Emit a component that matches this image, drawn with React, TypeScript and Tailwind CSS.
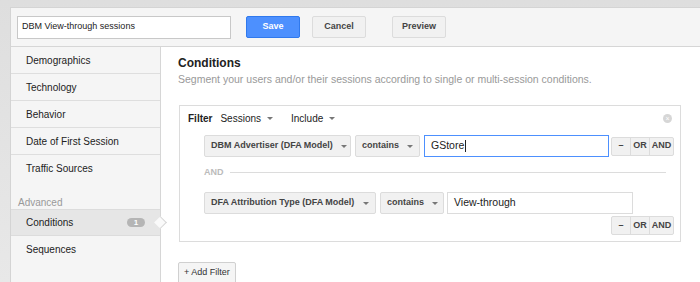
import React from 'react'

const sidebarItems = ['Demographics', 'Technology', 'Behavior', 'Date of First Session', 'Traffic Sources']

function Caret({ gap = 'ml-[8px]' }: { gap?: string }) {
    return <span className={`${gap} inline-block h-0 w-0 shrink-0 border-x-[3px] border-t-[3px] border-x-transparent border-t-[#777]`} />
}

function Dropdown({ label, w }: { label: string; w: string }) {
    return (
        <div className={`${w} flex h-[22px] items-center justify-between whitespace-nowrap rounded-[2px] border border-[#dcdcdc] bg-[#f1f1f1] px-[6px] text-[9px] font-bold text-[#444]`}>
            <span>{label}</span>
            <Caret />
        </div>
    )
}

function OpButtons() {
    return (
        <div className="flex h-[19px] rounded-[2px] border border-[#dcdcdc] bg-[#f1f1f1] text-[9px] font-bold text-[#444]">
            <span className="flex w-[19px] items-center justify-center border-r border-[#dcdcdc]">–</span>
            <span className="flex w-[19px] items-center justify-center border-r border-[#dcdcdc]">OR</span>
            <span className="flex w-[23px] items-center justify-center">AND</span>
        </div>
    )
}

export default function App() {
    return (
        <div className="h-[282px] w-[700px] overflow-hidden bg-gradient-to-b from-[#dedede] to-[#e8e8e8] pl-[10px] pt-[7px] font-['Liberation_Sans',Arial,sans-serif]">
            <div className="h-full border-l border-t border-[#d4d4d4] bg-white">

                {/* Header */}
                <div className="flex h-[39px] items-center border-b border-[#d6d6d6] bg-[#f5f5f5] pl-[6px]">
                    <div className="flex h-[23px] w-[214px] items-center border border-[#c8c8c8] bg-white px-[4px] text-[9px] text-[#222]">
                        DBM View-through sessions
                    </div>
                    <button className="ml-[15px] h-[22px] w-[54px] rounded-[2px] border border-[#3079ed] bg-[#4d90fe] text-[9px] font-bold text-white">
                        Save
                    </button>
                    <button className="ml-[12px] h-[22px] w-[54px] rounded-[2px] border border-[#dcdcdc] bg-[#f1f1f1] text-[9px] font-bold text-[#444]">
                        Cancel
                    </button>
                    <button className="ml-[26px] h-[22px] w-[54px] rounded-[2px] border border-[#dcdcdc] bg-[#f1f1f1] text-[9px] font-bold text-[#444]">
                        Preview
                    </button>
                </div>

                <div className="flex h-full">
                    {/* Sidebar */}
                    <div className="relative w-[150px] shrink-0 border-r border-[#d6d6d6] bg-[#f5f5f5] text-[10px] text-[#222]">
                        {sidebarItems.map((item, i) => (
                            <div
                                key={item}
                                className={`flex h-[27px] items-center pl-[15px] ${i < sidebarItems.length - 1 ? 'border-b border-[#dedede]' : ''}`}
                            >
                                {item}
                            </div>
                        ))}
                        <div className="mt-[14px] h-[13px] pl-[7px] text-[10px] leading-[13px] text-[#999]">Advanced</div>
                        <div className="relative flex h-[27px] items-center justify-between border-y border-[#dcdcdc] bg-[#e6e6e6] pl-[15px] pr-[15px]">
                            <span>Conditions</span>
                            <span className="flex h-[9px] w-[18px] items-center justify-center rounded-full bg-[#b5b5b5] text-[8px] font-bold leading-none text-white">1</span>
                            <span className="absolute -right-[5px] top-[8px] h-[9px] w-[9px] rotate-45 border-r border-t border-[#d6d6d6] bg-[#fafafa]" />
                        </div>
                        <div className="flex h-[27px] items-center pl-[15px]">Sequences</div>
                    </div>

                    {/* Main */}
                    <div className="flex-1 pl-[17px] pt-[9px]">
                        <h2 className="text-[12px] font-bold leading-[15px] text-[#222]">Conditions</h2>
                        <p className="mt-[2px] text-[10.5px] leading-[13px] text-[#999]">
                            Segment your users and/or their sessions according to single or multi-session conditions.
                        </p>

                        {/* Filter box */}
                        <div className="ml-[1px] mt-[19px] w-[502px] border border-[#dcdcdc] pb-[6px] pl-[24px] pr-[6px] pt-[5px]">
                            <div className="-ml-[16px] flex h-[14px] items-center text-[10px] text-[#222]">
                                <span className="font-bold">Filter</span>
                                <span className="ml-[8px] flex items-center">Sessions<Caret gap="ml-[6px]" /></span>
                                <span className="ml-[18px] flex items-center">Include<Caret gap="ml-[6px]" /></span>
                                <span className="ml-auto mr-[2px] flex h-[9px] w-[9px] items-center justify-center rounded-full bg-[#d6d6d6] text-[7px] leading-none text-white">×</span>
                            </div>

                            <div className="mt-[10px] flex items-center">
                                <Dropdown label="DBM Advertiser (DFA Model)" w="w-[147px]" />
                                <div className="ml-[4px]"><Dropdown label="contains" w="w-[65px]" /></div>
                                <div className="ml-[4px] flex h-[22px] w-[185px] items-center border border-[#4d90fe] bg-white px-[6px] text-[10.5px] text-[#222]">
                                    GStore<span className="ml-[1px] h-[12px] w-px bg-[#222]" />
                                </div>
                                <div className="ml-[2px]"><OpButtons /></div>
                            </div>

                            <div className="mt-[10px] flex items-center gap-[6px]">
                                <span className="text-[9px] font-bold leading-[11px] text-[#bbb]">AND</span>
                                <div className="mr-[8px] h-px flex-1 bg-[#dcdcdc]" />
                            </div>

                            <div className="mt-[14px] flex items-center">
                                <Dropdown label="DFA Attribution Type (DFA Model)" w="w-[172px]" />
                                <div className="ml-[4px]"><Dropdown label="contains" w="w-[64px]" /></div>
                                <div className="ml-[3px] flex h-[22px] w-[186px] items-center border border-[#dcdcdc] bg-white px-[6px] text-[10.5px] text-[#222]">
                                    View-through
                                </div>
                            </div>
                            <div className="mt-[2px] flex justify-end">
                                <OpButtons />
                            </div>
                        </div>

                        <button className="mt-[20px] h-[22px] rounded-[2px] border border-[#d0d0d0] bg-[#f5f5f5] px-[5px] text-[9px] text-[#333]">
                            + Add Filter
                        </button>
                    </div>
                </div>
            </div>
        </div>
    )
}
